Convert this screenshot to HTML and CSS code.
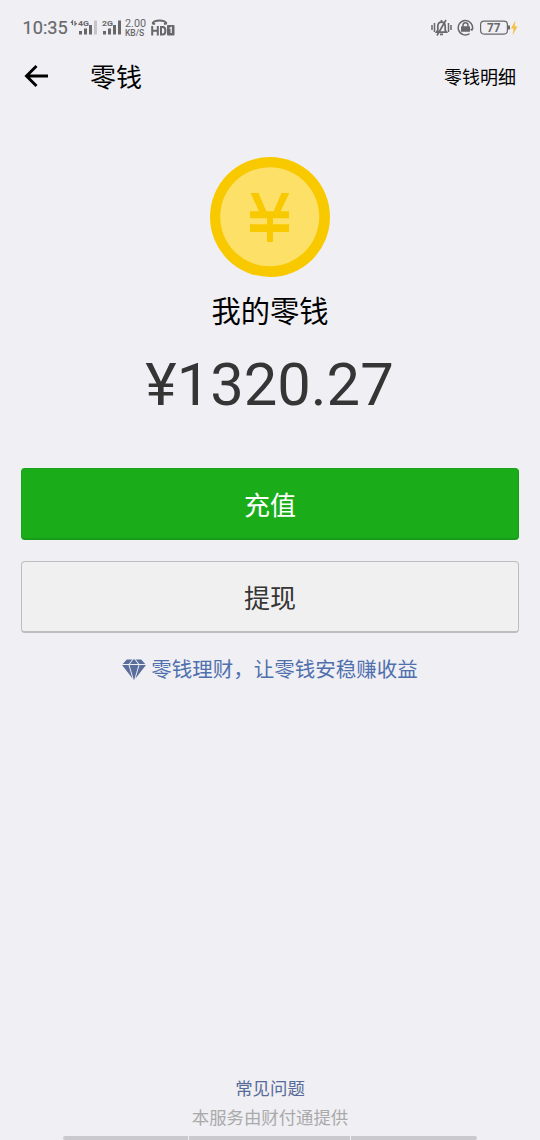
FILE: index.html
```html
<!DOCTYPE html>
<html lang="zh-CN">
<head>
<meta charset="utf-8">
<title>零钱</title>
<link rel="stylesheet" href="styles.css">
</head>
<body>
<div class="screen">
  <div class="status">
    <span class="time">10:35</span>
    <svg class="signals" width="52" height="24" viewBox="0 0 52 24">
      <path d="M2.500 9V5L.8 6.800M5 5v4l1.700-1.800" fill="none" stroke="#68686b" stroke-width="1.200"/>
      <text x="8" y="9.800" class="net" textLength="11" lengthAdjust="spacingAndGlyphs">4G</text>
      <path d="M9 15h3v3.500h-3zM14 12.500h3v6h-3zM19 9h3v9.500h-3z" fill="#68686b"/>
      <path d="M24 4.500h3v14h-3z" fill="#c5c5c9"/>
      <text x="32" y="9.800" class="net" textLength="11" lengthAdjust="spacingAndGlyphs">2G</text>
      <path d="M33 15h3v3.500h-3zM38 12.500h3v6h-3zM43 9h3v9.500h-3zM48 4.500h3v14h-3z" fill="#68686b"/>
    </svg>
    <span class="speed"><span class="rate">2.00</span><span class="unit">KB/S</span></span>
    <svg class="hd" width="24" height="18" viewBox="0 0 24 18">
      <path d="M1.500 4.300C4 .7 13 .7 15.500 4.300M1 4.200l3 .9M16 4.200l-3 .9" fill="none" stroke="#68686b" stroke-width="2"/>
      <path d="M1.200 7v9.500M6.800 7v9.500M1.200 11.700h5.600M10 7.900v7.700h1.700q2.700 0 2.700-3.850T11.700 7.900H9" fill="none" stroke="#68686b" stroke-width="2"/>
      <rect x="16" y="6" width="7.500" height="10.500" rx="1" fill="#68686b"/>
      <path d="M18.600 9.500l1.600-1v5.500" fill="none" stroke="#efeff4" stroke-width="1.300"/>
    </svg>
    <span class="right">
      <svg width="21" height="18" viewBox="0 0 21 18" fill="none" stroke="#68686b">
        <path d="M1 6v5M3.500 4v9M17.500 4v9M20 6v5" stroke-width="1.500"/>
        <path d="M5.500 13.200h10l-1.300-2V7.500C14.200 4.500 12.500 3.200 10.500 3.200S6.800 4.500 6.800 7.500v3.700zM9 15.300h3M10.500 1v2" stroke-width="1.700"/>
        <path d="M15 1L6 16.500" stroke-width="1.600"/>
      </svg>
      <svg class="lock" width="17" height="18" viewBox="0 0 17 18">
        <path d="M12.500 14.700A7.200 7.200 0 1 1 15.400 10.500" fill="none" stroke="#68686b" stroke-width="1.500"/>
        <path d="M16.300 9l-1.100 3.200-2.300-2z" fill="#68686b"/>
        <rect x="4" y="7.300" width="9" height="5.500" rx=".5" fill="#68686b"/>
        <path d="M6 8V6.200a2.500 2.500 0 0 1 5 0V8" fill="none" stroke="#68686b" stroke-width="1.500"/>
      </svg>
      <svg class="battery" width="38" height="18" viewBox="0 0 38 18">
        <rect x=".6" y="2.100" width="26.800" height="13" rx="3.500" fill="none" stroke="#68686b" stroke-width="1.200"/>
        <path d="M28 6.500h2v4h-2z" fill="#68686b"/>
        <text x="7" y="12.800" class="level" textLength="13.500" lengthAdjust="spacingAndGlyphs">77</text>
        <path d="M35.500 1.500l-4.500 8h2.700l-1.200 6.500 5-8.500h-2.800z" fill="#f8bd3d"/>
      </svg>
    </span>
  </div>
  <header class="bar">
    <svg class="back" width="26" height="26" viewBox="0 0 26 26"><path d="M25 13H3.500M13.500 3L3.500 13l10 10" fill="none" stroke="#000" stroke-width="2.900"/></svg>
    <h1 class="title">零钱</h1>
    <a class="detail">零钱明细</a>
  </header>
  <main class="main">
    <svg class="coin" width="120" height="120" viewBox="0 0 120 120">
      <circle cx="60" cy="60" r="60" fill="#f9c900"/>
      <circle cx="59.700" cy="59.700" r="49.500" fill="#fce068"/>
      <path d="M40.500 36h8l7.800 18.300h7.400L71.500 36h7.800L70.600 54.300H79v7H63v6h16V75H63v10h-6V75H40v-7.700h17v-6H40v-7h9z" fill="#f9c900"/>
    </svg>
    <div class="label">我的零钱</div>
    <div class="amount">¥1320.27</div>
    <button class="btn primary">充值</button>
    <button class="btn plain">提现</button>
    <a class="promo">
      <svg width="24" height="22" viewBox="0 0 24 22" fill="#596e9c">
        <path d="M4.800.5h5.500L6.800 5H.8zM11.200.5h1.600L16 5H8zM13.800.5h5.400l4 4.500h-6zM0 6h6.500L10.500 19.500zM7.500 6h9L12 21.500zM17.500 6H24L13.500 19.500z"/>
      </svg>
      <span>零钱理财，让零钱安稳赚收益</span>
    </a>
  </main>
  <footer class="foot">
    <a class="faq">常见问题</a>
    <div class="provider">本服务由财付通提供</div>
    <div class="nav"><i></i><i></i><i></i></div>
  </footer>
</div>
</body>
</html>
```
FILE: styles.css
```css
* { box-sizing: border-box; }
body {
  margin: 0;
  background: #efeff4;
  font-family: Roboto, "Noto Sans CJK SC", sans-serif;
}
.screen {
  display: flex;
  flex-direction: column;
  width: 540px;
  height: 1140px;
  overflow: hidden;
}
.status {
  display: flex;
  align-items: center;
  height: 55px;
  padding: 0 22px;
  color: #68686b;
}
.time { width: 48px; padding-left: .5px; font-size: 18.200px; line-height: 24px; white-space: nowrap; -webkit-text-stroke: .2px #68686b; }
.signals { margin: -2px 0; }
.net { font: 700 7px Roboto, sans-serif; fill: #68686b; }
.speed { display: flex; flex-direction: column; width: 22px; margin: 0 4px 0 3px; }
.rate { font-size: 10.800px; line-height: 10px; }
.unit { font-size: 8.500px; line-height: 8px; font-weight: 500; }
.right { display: flex; align-items: center; margin-left: auto; }
.lock { margin: 0 6px 0 5px; }
.level { font: 700 12px Roboto, sans-serif; fill: #68686b; }
.bar { display: flex; align-items: center; height: 43px; padding: 0 24px 0 23px; }
.back { margin-bottom: 2px; }
.title { margin: 0 0 0 41px; padding-top: 3px; font-size: 26px; line-height: 40px; font-weight: 400; color: #000; }
.detail { margin-left: auto; padding-top: 2px; font-size: 18px; line-height: 26px; color: #000; }
.main { display: flex; flex-direction: column; align-items: center; padding: 59px 21px 0; }
.label { margin-top: 13px; font-size: 29.300px; line-height: 44px; color: #000; }
.amount { margin-top: 16px; padding-right: 1px; font-size: 59.700px; line-height: 70px; color: #353535; }
.btn {
  width: 498px;
  height: 72px;
  padding: 5px 0 0;
  border: 1px solid;
  border-radius: 4px;
  font: 400 26px/64px Roboto, "Noto Sans CJK SC", sans-serif;
}
.primary {
  margin-top: 48px;
  background: #1aad19;
  border-color: #1aa31b #189b1a #189b1a #1aa31b;
  border-bottom-width: 2px;
  color: #fff;
}
.plain {
  margin-top: 21px;
  background: #f0f0f0;
  border-color: #bdbdbf;
  border-bottom-width: 2px;
  color: #353535;
}
.promo {
  display: flex;
  align-items: center;
  gap: 5px;
  margin-top: 22px;
  font-size: 20.500px;
  line-height: 30px;
  color: #5070ad;
}
.foot { display: flex; flex-direction: column; align-items: center; margin-top: auto; }
.faq { font-size: 17.400px; line-height: 28px; color: #586b98; }
.provider { margin-top: 1px; font-size: 17.400px; line-height: 28px; color: #aaa; }
.nav { display: grid; grid-template-columns: 125px 161px 126px; gap: 1px; width: 414px; height: 4px; margin-top: 4px; }
.nav i { background: #cacace; }
.nav i:first-child { border-radius: 3px 0 0 3px; }
.nav i:last-child { border-radius: 0 3px 3px 0; }
```
